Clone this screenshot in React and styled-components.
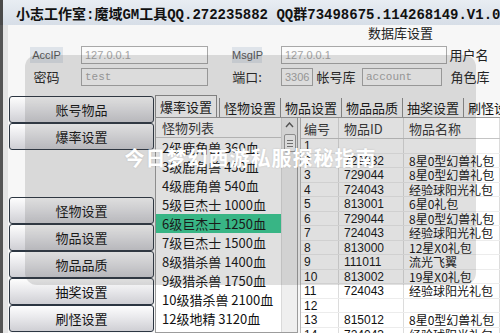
import styled, { createGlobalStyle } from 'styled-components'

const GlobalStyle = createGlobalStyle`
  html, body {
    margin: 0;
    padding: 0;
  }
  body {
    width: 500px;
    height: 333px;
    overflow: hidden;
    background: #ffffff;
    font-family: "Noto Sans CJK SC", "Liberation Sans", sans-serif;
  }
`

const Window = styled.div`
  position: relative;
  width: 500px;
  height: 333px;
  overflow: hidden;
  display: flex;
  flex-direction: column;
  background: #f7f7f7;
`

const TitleBar = styled.div`
  height: 25px;
  flex: none;
  display: flex;
  align-items: center;
  gap: 3px;
  padding-left: 10px;
  background: linear-gradient(#e8edf3, #d7dee7);
  border-left: 3px solid #4a4a4a;
  white-space: nowrap;
`

const TitleText = styled.span`
  font-family: "Liberation Mono", "Noto Sans CJK SC", monospace;
  font-weight: bold;
  font-size: 14px;
  color: #111;
`

const Body = styled.div`
  flex: 1;
  display: flex;
  min-height: 0;
`

const Frame = styled.div`
  width: 5px;
  flex: none;
  background: #e4e4e4;
  border-left: 3px solid #555;
`

const Client = styled.div`
  flex: 1;
  display: flex;
  flex-direction: column;
  min-width: 0;
`

const DbSection = styled.div`
  height: 70px;
  flex: none;
  display: flex;
  flex-direction: column;
  gap: 3px;
`

const Caption = styled.div`
  height: 16px;
  line-height: 16px;
  padding-left: 360px;
  font-size: 13px;
  color: #222;
`

const FieldRow = styled.div`
  height: 19px;
  display: flex;
  align-items: center;
  margin-top: ${p => p.$mt || 0}px;
`

const Label = styled.span`
  flex: none;
  width: ${p => p.$w}px;
  margin-left: ${p => p.$ml || 0}px;
  height: 16px;
  line-height: 16px;
  text-align: center;
  font-size: ${p => (p.$boxed ? 11 : 13)}px;
  font-family: ${p => (p.$boxed ? '"Liberation Sans", sans-serif' : 'inherit')};
  color: ${p => (p.$boxed ? '#555' : '#222')};
  background: ${p => (p.$boxed ? '#dfe4ea' : 'transparent')};
`

const Input = styled.div`
  flex: none;
  box-sizing: border-box;
  width: ${p => p.$w}px;
  margin-left: ${p => p.$ml || 0}px;
  height: 18px;
  line-height: 16px;
  padding-left: 3px;
  border: 1px solid #a8a8a8;
  background: #fbfbfb;
  color: #a6a6a6;
  font-size: 11px;
  font-family: ${p => (p.$mono ? '"Liberation Mono", monospace' : '"Liberation Sans", sans-serif')};
  overflow: hidden;
  white-space: nowrap;
`

const Main = styled.div`
  flex: 1;
  display: flex;
  min-height: 0;
`

const Nav = styled.div`
  width: 145px;
  flex: none;
  margin-left: 1px;
  display: flex;
  flex-direction: column;
  padding-top: 1px;
`

const NavButton = styled.div`
  box-sizing: border-box;
  height: 27px;
  flex: none;
  display: flex;
  align-items: center;
  justify-content: center;
  border: 1px solid #2c3642;
  border-radius: 3px;
  background: linear-gradient(#fdfdfd 0%, #e9e9ec 45%, #cfcfd4 100%);
  font-size: 13px;
  color: #111;
`

const NavGap = styled.div`
  height: 47px;
  flex: none;
`

const Content = styled.div`
  flex: 1;
  display: flex;
  flex-direction: column;
  min-width: 0;
  padding-left: 1px;
`

const Tabs = styled.div`
  height: 22px;
  flex: none;
  display: flex;
  align-items: flex-end;
  border-bottom: 1px solid #9a9a9a;
  white-space: nowrap;
`

const Tab = styled.div`
  flex: none;
  height: ${p => (p.$active ? 21 : 19)}px;
  line-height: ${p => (p.$active ? 21 : 19)}px;
  padding: 0 4px;
  font-size: 13px;
  color: #111;
  border-left: 1px solid #8c8c8c;
  border-right: ${p => (p.$active ? '1px solid #8c8c8c' : 'none')};
  border-top: ${p => (p.$active ? '1px solid #8c8c8c' : 'none')};
  background: ${p => (p.$active ? '#fbfbfb' : 'transparent')};
  margin-right: ${p => (p.$active ? 2 : 0)}px;
`

const Panel = styled.div`
  flex: 1;
  display: flex;
  gap: 2px;
  min-height: 0;
`

const ListBox = styled.div`
  width: 141px;
  flex: none;
  display: flex;
  border: 1px solid #9c9c9c;
  border-top: none;
  background: #fff;
`

const ListMain = styled.div`
  flex: 1;
  display: flex;
  flex-direction: column;
  overflow: hidden;
`

const ListHeader = styled.div`
  height: 19px;
  line-height: 19px;
  padding-left: 6px;
  font-size: 13px;
  color: #333;
  border-bottom: 1px solid #c8c8c8;
  flex: none;
`

const ListItem = styled.div`
  height: 19px;
  line-height: 19px;
  flex: none;
  padding-left: 6px;
  font-size: 13px;
  color: #111;
  white-space: nowrap;
  background: ${p => (p.$selected ? '#36cc92' : 'transparent')};
`

const ScrollBar = styled.div`
  width: 15px;
  flex: none;
  background: #efefef;
  border-left: 1px solid #dadada;
  display: flex;
  flex-direction: column;
  align-items: center;
  padding-top: 4px;
  gap: 6px;
`

const Thumb = styled.div`
  box-sizing: border-box;
  width: 12px;
  height: 18px;
  border: 1px solid #9a9a9a;
  border-radius: 2px;
  background: #f8f8f8;
  display: flex;
  flex-direction: column;
  justify-content: center;
  align-items: center;
  gap: 2px;
`

const Grip = styled.div`
  width: 6px;
  height: 1px;
  background: #777;
`

const Table = styled.div`
  flex: 1;
  display: flex;
  flex-direction: column;
  background: #fff;
  border-left: 1px solid #b8b8b8;
  min-width: 0;
  overflow: hidden;
`

const TRow = styled.div`
  display: grid;
  grid-template-columns: 38px 65px 1fr;
  height: ${p => (p.$head ? 21 : 14.5)}px;
  line-height: ${p => (p.$head ? 21 : 14.5)}px;
  flex: none;
  border-bottom: 1px solid ${p => (p.$head ? '#c4c4c4' : '#ececec')};
  box-sizing: border-box;
  font-size: ${p => (p.$head ? 13 : 12)}px;
  color: ${p => (p.$head ? '#333' : '#111')};
`

const Cell = styled.div`
  padding-left: ${p => (p.$first ? 3 : 5)}px;
  border-right: 1px solid #dcdcdc;
  white-space: nowrap;
  overflow: hidden;
  font-family: ${p => (p.$num ? '"Liberation Sans", sans-serif' : 'inherit')};
`

const Overlay = styled.div`
  position: absolute;
  left: 25px;
  top: 55px;
  width: 451px;
  height: 230px;
  border-radius: 12px;
  background: rgba(70, 70, 70, 0.17);
  display: flex;
  justify-content: center;
  padding-top: 90px;
  box-sizing: border-box;
  pointer-events: none;
`

const OverlayText = styled.div`
  font-size: 20px;
  font-weight: bold;
  color: #ffffff;
  letter-spacing: 1px;
  height: 26px;
  line-height: 26px;
  text-shadow: 0 0 2px rgba(0, 0, 0, 0.15);
`

function AppIcon() {
  return (
    <svg width="18" height="18" viewBox="0 0 18 18">
      <rect x="0.5" y="0.5" width="17" height="17" rx="2" fill="#163c8c" stroke="#0b2460" />
      <rect x="2" y="2" width="6" height="14" fill="#0e2c70" />
      <path d="M9 3 L15 3 L15 15 L11 13 L9 15 Z" fill="#6fb6ee" />
      <path d="M10 5 L14 5 L14 9 L10 9 Z" fill="#cfe8fb" />
    </svg>
  )
}

const monsters = [
  '2级鹿角兽 360血',
  '3级鹿角兽 450血',
  '4级鹿角兽 540血',
  '5级巨杰士 1000血',
  '6级巨杰士 1250血',
  '7级巨杰士 1500血',
  '8级猎杀兽 1400血',
  '9级猎杀兽 1750血',
  '10级猎杀兽 2100血',
  '12级地精 3120血',
  '13级地精 3900血',
]

const items = [
  ['1', '', ''],
  ['2', '729032', '8星0型幻兽礼包'],
  ['3', '729044', '8星0型幻兽礼包'],
  ['4', '724043', '经验球阳光礼包'],
  ['5', '813001', '6星0礼包'],
  ['6', '729044', '8星0型幻兽礼包'],
  ['7', '724043', '经验球阳光礼包'],
  ['8', '813000', '12星X0礼包'],
  ['9', '111011', '流光飞翼'],
  ['10', '813002', '19星X0礼包'],
  ['11', '724043', '经验球阳光礼包'],
  ['12', '', ''],
  ['13', '815012', '8星0型幻兽礼包'],
  ['14', '724043', '经验球阳光礼包'],
]

const tabs = ['爆率设置', '怪物设置', '物品设置', '物品品质', '抽奖设置', '刷怪设置']

function App() {
  return (
    <Window>
      <GlobalStyle />
      <TitleBar>
        <AppIcon />
        <TitleText>小志工作室:魔域GM工具QQ.272235882 QQ群73498675.114268149.V1.0</TitleText>
      </TitleBar>
      <Body>
        <Frame />
        <Client>
          <DbSection>
            <Caption>数据库设置</Caption>
            <FieldRow $mt={1}>
              <Label $w={33} $ml={22} $boxed>AccIP</Label>
              <Input $w={127} $ml={18}>127.0.0.1</Input>
              <Label $w={30} $ml={24} $boxed>MsgIP</Label>
              <Input $w={166} $ml={19}>127.0.0.1</Input>
              <Label $w={40} $ml={2}>用户名</Label>
            </FieldRow>
            <FieldRow>
              <Label $w={33} $ml={22}>密码</Label>
              <Input $w={127} $ml={18} $mono>test</Input>
              <Label $w={30} $ml={24}>端口:</Label>
              <Input $w={32} $ml={19}>3306</Input>
              <Label $w={40} $ml={3}>帐号库</Label>
              <Input $w={80} $ml={6} $mono>account</Input>
              <Label $w={40} $ml={8}>角色库</Label>
            </FieldRow>
          </DbSection>
          <Main>
            <Nav>
              <NavButton>账号物品</NavButton>
              <NavButton>爆率设置</NavButton>
              <NavGap />
              <NavButton>怪物设置</NavButton>
              <NavButton>物品设置</NavButton>
              <NavButton>物品品质</NavButton>
              <NavButton>抽奖设置</NavButton>
              <NavButton>刷怪设置</NavButton>
            </Nav>
            <Content>
              <Tabs>
                {tabs.map((t, i) => (
                  <Tab key={t} $active={i === 0}>{t}</Tab>
                ))}
              </Tabs>
              <Panel>
                <ListBox>
                  <ListMain>
                    <ListHeader>怪物列表</ListHeader>
                    {monsters.map((m, i) => (
                      <ListItem key={m} $selected={i === 4}>{m}</ListItem>
                    ))}
                  </ListMain>
                  <ScrollBar>
                    <svg width="9" height="6" viewBox="0 0 9 6">
                      <path d="M1 5 L4.5 1 L8 5" fill="none" stroke="#555" strokeWidth="1.4" />
                    </svg>
                    <Thumb>
                      <Grip />
                      <Grip />
                      <Grip />
                    </Thumb>
                  </ScrollBar>
                </ListBox>
                <Table>
                  <TRow $head>
                    <Cell $first>编号</Cell>
                    <Cell>物品ID</Cell>
                    <Cell>物品名称</Cell>
                  </TRow>
                  {items.map(r => (
                    <TRow key={r[0]}>
                      <Cell $first $num>{r[0]}</Cell>
                      <Cell $num>{r[1]}</Cell>
                      <Cell>{r[2]}</Cell>
                    </TRow>
                  ))}
                </Table>
              </Panel>
            </Content>
          </Main>
        </Client>
      </Body>
      <Overlay>
        <OverlayText>今日梦幻西游私服探秘指南</OverlayText>
      </Overlay>
    </Window>
  )
}

export default App
